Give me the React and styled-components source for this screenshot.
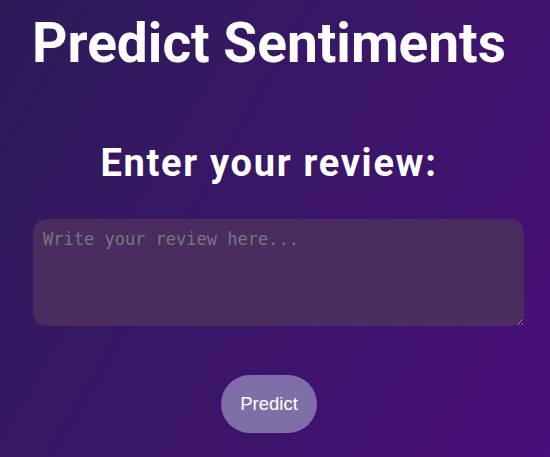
import React from "react";
import styled, { createGlobalStyle } from "styled-components";

const Global = createGlobalStyle`
  html, body { margin: 0; padding: 0; }
  body {
    min-height: 457px;
    background: linear-gradient(120deg, #2d1b59 0%, #3a1668 50%, #4a0d79 100%);
    font-family: Roboto, "Liberation Sans", sans-serif;
  }
`;

const Page = styled.main`
  min-height: 457px;
  padding: 10px 0 0 33px;
  box-sizing: border-box;
`;

const Column = styled.div`
  width: 472px;
  display: flex;
  flex-direction: column;
  align-items: center;
`;

const Title = styled.h1`
  margin: 0;
  font-family: Roboto, sans-serif;
  font-weight: 700;
  font-size: 55px;
  color: #ffffff;
  line-height: 66px;
  white-space: nowrap;
`;

const Subtitle = styled.h2`
  margin: 65px 0 0;
  font-family: Roboto, sans-serif;
  font-weight: 700;
  font-size: 38px;
  line-height: 44px;
  letter-spacing: 1.7px;
  color: #ffffff;
  white-space: nowrap;
`;

const Review = styled.textarea`
  align-self: flex-start;
  margin-top: 34px;
  width: 491px;
  height: 107px;
  box-sizing: border-box;
  padding: 10px;
  border: none;
  border-radius: 14px;
  background: #4a2d5e;
  color: #ddd;
  font-family: "DejaVu Sans Mono", monospace;
  font-size: 17px;
  outline: none;
  &::placeholder { color: #7b7480; }
`;

const PredictButton = styled.button`
  margin-top: 49px;
  width: 96px;
  height: 58px;
  border: none;
  border-radius: 29px;
  background: #7e6fa8;
  color: #ffffff;
  font-family: "Liberation Sans", Arial, sans-serif;
  font-size: 18.5px;
  cursor: pointer;
`;

export default function App() {
  return (
    <>
      <Global />
      <Page>
        <Column>
          <Title>Predict Sentiments</Title>
          <Subtitle>Enter your review:</Subtitle>
          <Review placeholder="Write your review here..." />
          <PredictButton>Predict</PredictButton>
        </Column>
      </Page>
    </>
  );
}
